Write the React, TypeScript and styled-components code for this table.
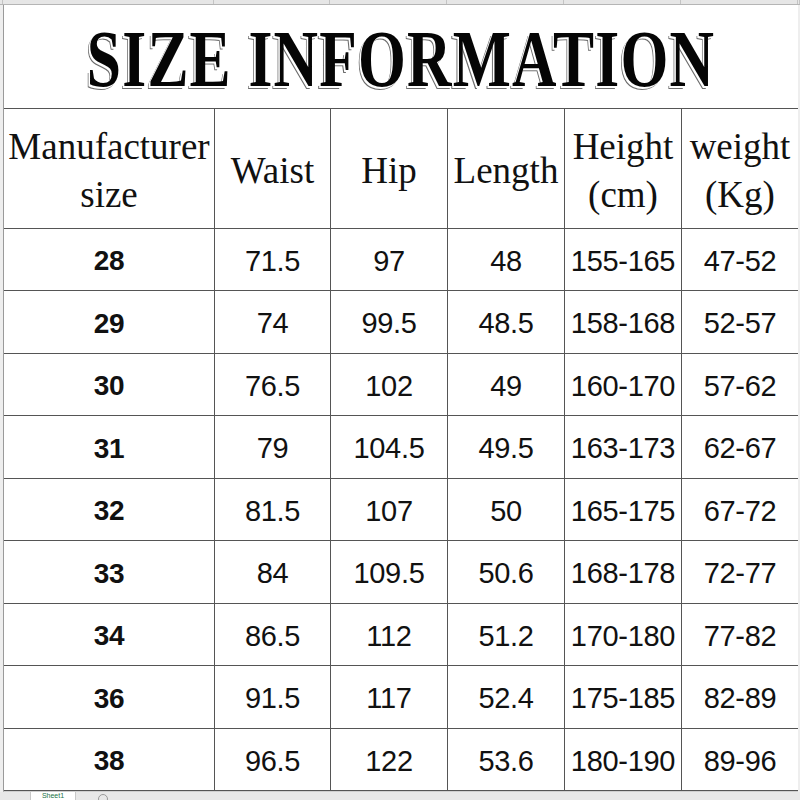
import React from 'react';
import styled, { createGlobalStyle } from 'styled-components';

const GlobalStyle = createGlobalStyle`
  html, body {
    margin: 0;
    padding: 0;
    background: #ffffff;
  }
  body {
    width: 800px;
    height: 800px;
    overflow: hidden;
  }
`;

const COLS = '211px 116px 117px 117px 117px 117px';

const Page = styled.div`
  width: 800px;
  height: 800px;
  display: flex;
  flex-direction: column;
  background: #e9e9e9;
  overflow: hidden;
`;

const ColumnStrip = styled.div`
  height: 4px;
  flex-shrink: 0;
  display: grid;
  grid-template-columns: 3px ${COLS} 1fr;
  border-bottom: 1px solid #b5b5b5;
  background: #e6e6e6;
`;

const StripCell = styled.div`
  border-right: 1px solid #c4c4c4;
`;

const Middle = styled.div`
  display: flex;
  height: 787px;
  flex-shrink: 0;
`;

const Gutter = styled.div<{ w: number }>`
  width: ${({ w }) => w}px;
  flex-shrink: 0;
  background: #eeeeee;
`;

const Sheet = styled.div`
  width: 795px;
  display: grid;
  grid-template-columns: ${COLS};
  grid-template-rows: 104px 120px 62px 63px 62px 63px 62px 63px 62px 63px 62px;
  background: #ffffff;
  border-left: 1px solid #9a9a9a;
  border-bottom: 1px solid #cfcfcf;
  box-sizing: border-box;
`;

const Cell = styled.div`
  border-right: 1px solid #555555;
  border-bottom: 1px solid #555555;
  display: flex;
  align-items: center;
  justify-content: center;
  text-align: center;
  color: #111111;
  box-sizing: border-box;
`;

const TitleCell = styled(Cell)`
  grid-column: 1 / -1;
  overflow: hidden;
`;

const Title = styled.h1`
  margin: 0;
  display: inline-block;
  font-family: "Liberation Serif", "Times New Roman", serif;
  font-weight: 700;
  font-size: 80px;
  letter-spacing: 1.5px;
  line-height: 1;
  color: #050505;
  white-space: nowrap;
  transform: scaleX(0.77);
  text-shadow: -2px 2px 0 #ffffff, -3px 3px 0 #6d6d6d;
  padding-top: 4px;
`;

const HeadCell = styled(Cell)`
  font-family: "Liberation Serif", "Times New Roman", serif;
  font-size: 37px;
  line-height: 48px;
  padding-top: 4px;
`;

const DataCell = styled(Cell)<{ bold?: boolean }>`
  font-family: "Liberation Sans", Arial, sans-serif;
  font-size: ${({ bold }) => (bold ? '28px' : '29px')};
  font-weight: ${({ bold }) => (bold ? 700 : 400)};
  letter-spacing: -0.3px;
  padding-top: 3px;
`;

const TabBar = styled.div`
  flex: 1;
  min-height: 0;
  display: flex;
  align-items: flex-start;
  background: #e8e8e8;
  padding-left: 30px;
  gap: 22px;
`;

const Tab = styled.div`
  width: 44px;
  height: 8px;
  background: #ffffff;
  border-left: 1px solid #c8c8c8;
  border-right: 1px solid #c8c8c8;
  font-family: "Liberation Sans", Arial, sans-serif;
  font-size: 7px;
  color: #217346;
  text-align: center;
  line-height: 8px;
`;

const AddIcon = styled.div`
  width: 8px;
  height: 8px;
  margin-top: 2px;
  border: 1px solid #9a9a9a;
  border-radius: 50%;
`;

const headers = [
  ['Manufacturer', 'size'],
  ['Waist'],
  ['Hip'],
  ['Length'],
  ['Height', '(cm)'],
  ['weight', '(Kg)'],
];

const rows = [
  ['28', '71.5', '97', '48', '155-165', '47-52'],
  ['29', '74', '99.5', '48.5', '158-168', '52-57'],
  ['30', '76.5', '102', '49', '160-170', '57-62'],
  ['31', '79', '104.5', '49.5', '163-173', '62-67'],
  ['32', '81.5', '107', '50', '165-175', '67-72'],
  ['33', '84', '109.5', '50.6', '168-178', '72-77'],
  ['34', '86.5', '112', '51.2', '170-180', '77-82'],
  ['36', '91.5', '117', '52.4', '175-185', '82-89'],
  ['38', '96.5', '122', '53.6', '180-190', '89-96'],
];

const App: React.FC = () => {
  return (
    <Page>
      <GlobalStyle />
      <ColumnStrip>
        {Array.from({ length: 8 }).map((_, i) => (
          <StripCell key={i} />
        ))}
      </ColumnStrip>
      <Middle>
        <Gutter w={3} />
        <Sheet>
          <TitleCell>
            <Title>SIZE INFORMATION</Title>
          </TitleCell>
          {headers.map((lines, i) => (
            <HeadCell key={i}>
              <div>
                {lines.map((l, j) => (
                  <div key={j}>{l}</div>
                ))}
              </div>
            </HeadCell>
          ))}
          {rows.map((row, r) =>
            row.map((v, c) => (
              <DataCell key={`${r}-${c}`} bold={c === 0}>
                {v}
              </DataCell>
            ))
          )}
        </Sheet>
        <Gutter w={2} />
      </Middle>
      <TabBar>
        <Tab>Sheet1</Tab>
        <AddIcon />
      </TabBar>
    </Page>
  );
};

export default App;
